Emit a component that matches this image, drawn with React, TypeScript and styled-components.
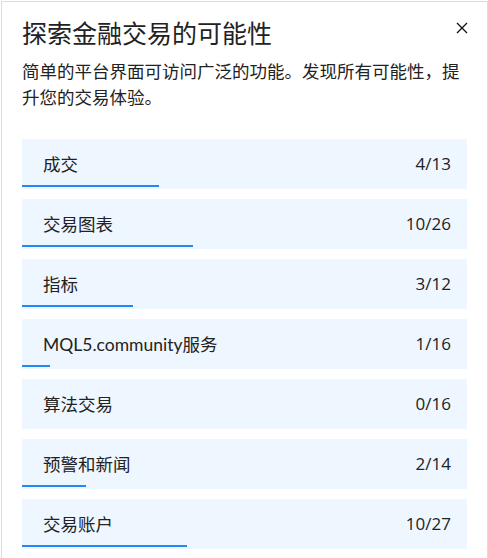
import React from 'react'
import styled, { createGlobalStyle } from 'styled-components'

const GlobalStyle = createGlobalStyle`
  html, body {
    margin: 0;
    padding: 0;
    background: #fff;
  }
  body {
    font-family: "Noto Sans CJK SC", "Noto Sans", sans-serif;
    color: #222;
  }
`

const Panel = styled.div`
  box-sizing: border-box;
  width: 487px;
  height: 560px;
  margin: 1px 0 0 1px;
  border: 1px solid #dcdcdc;
  border-bottom: none;
  padding: 13px 20px 0 20px;
  background: #fff;
`

const Header = styled.div`
  display: flex;
  justify-content: space-between;
  align-items: flex-start;
`

const Title = styled.h1`
  margin: 0;
  font-size: 25px;
  line-height: 34px;
  font-weight: 400;
  color: #222;
`

const CloseButton = styled.button`
  display: flex;
  align-items: center;
  justify-content: center;
  width: 24px;
  height: 24px;
  margin: 1px -7px 0 0;
  padding: 0;
  border: none;
  background: transparent;
  color: #111;
  cursor: pointer;
`

const Description = styled.p`
  margin: 9px 0 0;
  font-size: 17.5px;
  line-height: 26px;
  color: #222;
`

const List = styled.div`
  display: flex;
  flex-direction: column;
  gap: 10px;
  margin-top: 29px;
`

const Row = styled.div`
  position: relative;
  box-sizing: border-box;
  height: 50px;
  display: flex;
  align-items: center;
  justify-content: space-between;
  padding: 0 16px 1px 21px;
  background: #eef6ff;
  font-family: Lato, "Noto Sans CJK SC", sans-serif;
  font-size: 17.5px;
  color: #222;
`

const Count = styled.span`
  font-family: "Open Sans", "Noto Sans", sans-serif;
  font-size: 17px;
`

const Progress = styled.div`
  position: absolute;
  left: 0;
  bottom: 2px;
  height: 2px;
  background: #2388f2;
`

const sections = [
  { label: '成交', done: 4, total: 13 },
  { label: '交易图表', done: 10, total: 26 },
  { label: '指标', done: 3, total: 12 },
  { label: 'MQL5.community服务', done: 1, total: 16 },
  { label: '算法交易', done: 0, total: 16 },
  { label: '预警和新闻', done: 2, total: 14 },
  { label: '交易账户', done: 10, total: 27 },
]

export default function App() {
  return (
    <>
      <GlobalStyle />
      <Panel>
        <Header>
          <Title>探索金融交易的可能性</Title>
          <CloseButton aria-label="关闭">
            <svg width="12" height="12" viewBox="0 0 12 12">
              <path d="M1 1 L11 11 M11 1 L1 11" stroke="currentColor" strokeWidth="1.3" fill="none" />
            </svg>
          </CloseButton>
        </Header>
        <Description>简单的平台界面可访问广泛的功能。发现所有可能性，提升您的交易体验。</Description>
        <List>
          {sections.map((s) => (
            <Row key={s.label}>
              <span>{s.label}</span>
              <Count>
                {s.done}/{s.total}
              </Count>
              {s.done > 0 && <Progress style={{ width: `${(s.done / s.total) * 100}%` }} />}
            </Row>
          ))}
        </List>
      </Panel>
    </>
  )
}
